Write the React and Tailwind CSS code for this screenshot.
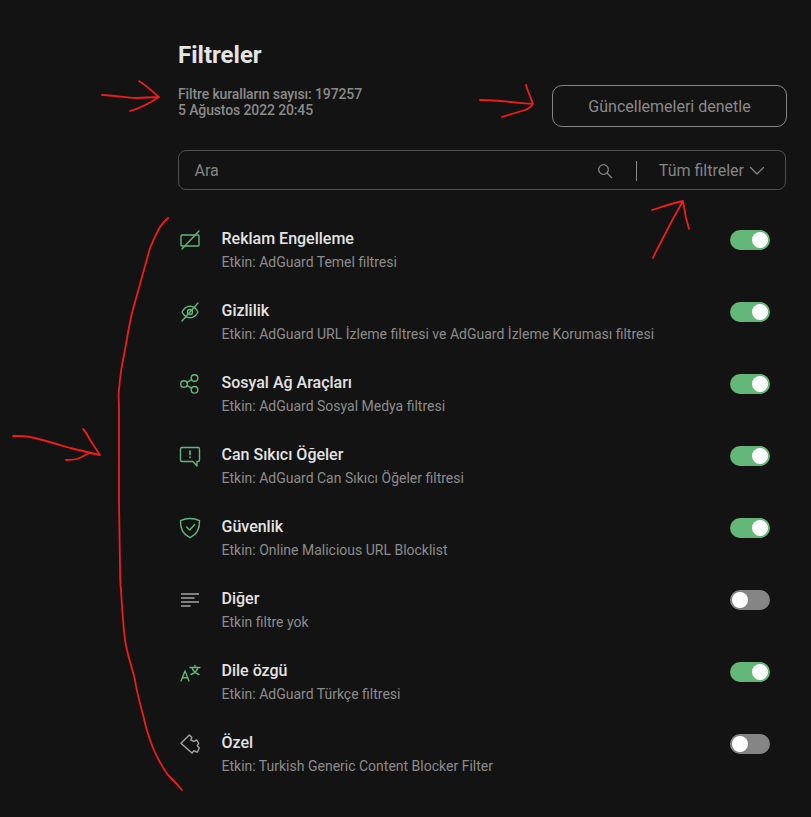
const green = "#62b678";
const gray = "#a4a4a4";

function Icon({ color, children }) {
  return (
    <svg width="24" height="24" viewBox="0 0 24 24" fill="none" stroke={color} strokeWidth="1.4" strokeLinecap="round" strokeLinejoin="round" className="shrink-0">
      {children}
    </svg>
  );
}

const filters = [
  {
    title: "Reklam Engelleme",
    sub: "Etkin: AdGuard Temel filtresi",
    on: true,
    icon: (
      <Icon color={green}>
        <rect x="3" y="7" width="18" height="11" rx="1" />
        <path d="M21 3 4 21" />
      </Icon>
    ),
  },
  {
    title: "Gizlilik",
    sub: "Etkin: AdGuard URL İzleme filtresi ve AdGuard İzleme Koruması filtresi",
    on: true,
    icon: (
      <Icon color={green}>
        <path d="M4 12c2-3.800 4.700-5.800 8-5.800s6 2 8 5.800c-2 3.800-4.700 5.800-8 5.800S6 15.800 4 12Z" />
        <circle cx="12" cy="12" r="2.500" />
        <path d="M20 3 4 21" />
      </Icon>
    ),
  },
  {
    title: "Sosyal Ağ Araçları",
    sub: "Etkin: AdGuard Sosyal Medya filtresi",
    on: true,
    icon: (
      <Icon color={green}>
        <circle cx="6" cy="12" r="3.300" />
        <circle cx="16.500" cy="6" r="3.300" />
        <circle cx="16.500" cy="17.800" r="3.300" />
        <path d="m9 10.300 4.600-2.600M9 13.700l4.600 2.500" />
      </Icon>
    ),
  },
  {
    title: "Can Sıkıcı Öğeler",
    sub: "Etkin: AdGuard Can Sıkıcı Öğeler filtresi",
    on: true,
    icon: (
      <Icon color={green}>
        <path d="M4 3.500h16A1.500 1.500 0 0 1 21.500 5v11A1.500 1.500 0 0 1 20 17.500h-1V22l-4-4.500H4A1.500 1.500 0 0 1 2.500 16V5A1.500 1.500 0 0 1 4 3.500Z" />
        <path d="M12 7v3.500M12 13v.5" strokeWidth="1.700" />
      </Icon>
    ),
  },
  {
    title: "Güvenlik",
    sub: "Etkin: Online Malicious URL Blocklist",
    on: true,
    icon: (
      <Icon color={green}>
        <path d="M12 2.500c3.500 0 6.800.8 9.500 2.200.300 7.800-2.800 13.800-9.500 17C5.300 18.500 2.200 12.500 2.500 4.700 5.200 3.300 8.500 2.500 12 2.500Z" />
        <path d="m8.500 11 3.200 3 5-5.500" />
      </Icon>
    ),
  },
  {
    title: "Diğer",
    sub: "Etkin filtre yok",
    on: false,
    icon: (
      <Icon color={gray}>
        <path d="M3 6h18M3 10h13.500M3 14h18M3 18h9.500" strokeWidth="1.500" strokeLinecap="butt" />
      </Icon>
    ),
  },
  {
    title: "Dile özgü",
    sub: "Etkin: AdGuard Türkçe filtresi",
    on: true,
    icon: (
      <Icon color={green}>
        <path d="m3 21 4-10 4 10M4.500 17.800h5" />
        <path d="M12 7.500h10M17 5.500v2M14 7.500c.8 3 3 5.500 7 7M20 7.500c-.8 3-3 5.500-7 7" />
      </Icon>
    ),
  },
  {
    title: "Özel",
    sub: "Etkin: Turkish Generic Content Blocker Filter",
    on: false,
    icon: (
      <Icon color={gray}>
        <path d="M3 11.300 11.300 3 14 5.500 12.700 8 16 9.300 18.700 8 20.700 11.300 19.300 13.700 21.300 16 19.300 20.300 16 18.700 14 21 11.300 18.700Z" />
      </Icon>
    ),
  },
];

function Toggle({ on }) {
  return (
    <div className={`flex h-5 w-10 shrink-0 items-center rounded-full px-0.5 ${on ? "justify-end bg-[#62b678]" : "justify-start bg-[#858585]"}`}>
      <div className="h-4 w-4 rounded-full bg-white" />
    </div>
  );
}

function Row({ item }) {
  return (
    <div className="flex h-[72px] items-start pr-[17px] pt-[22px]">
      <div className="mt-[2px] w-[43.5px]">{item.icon}</div>
      <div className="min-w-0 flex-1">
        <div className="pt-px text-base leading-[23px] font-medium text-[#e3e3e3]">{item.title}</div>
        <div className="text-sm leading-6 text-[#8c8c8c]">{item.sub}</div>
      </div>
      <div className="mt-1"><Toggle on={item.on} /></div>
    </div>
  );
}

// el yazısı kırmızı oklar
function Annotations() {
  return (
    <svg className="pointer-events-none absolute top-0 left-0" width="811" height="817" fill="none" stroke="#ee1c1c" strokeWidth="1.800" strokeLinecap="round" strokeLinejoin="round">
      <path d="M102 95C114 95 126 98 136 98L159 97M139 81C147 86 153 92 159 97C150 103 141 108 130 111" />
      <path d="M480 100C498 100 516 103 533 104M526 85C528 92 531 98 533 104C531 107 528 109 525 110L502 117" />
      <path d="M653 258C656 251 659 246 662 240C669 226 676 213 683 201M652 210C662 207 672 203 683 201L686 218L689 229" />
      <path d="M168 218C165 221 162 224 160 227C156 234 153 241 150 248L132 313C129 326 127 338 125 350C122 363 120 377 119 390C118 396 119 401 119 407L119 500L120 567C120 575 120 583 121 590C122 607 123 623 125 640C127 654 132 667 135 680C137 695 142 709 145 723C147 732 150 740 153 748C157 757 162 767 168 775C173 780 178 785 182 790" />
      <path d="M13 436C19 436 25 436 30 437C44 440 57 444 70 448L100 455M83 429C86 432 88 436 90 440L100 455M100 455L90 453C86 454 81 458 77 459C73 460 69 460 66 460" />
    </svg>
  );
}

export default function App() {
  return (
    <div className="relative min-h-[817px] bg-[#131313] pt-[41px] pr-[24px] pl-[178px] font-['Roboto',sans-serif]">
      <h1 className="text-2xl leading-7 font-bold text-[#e4e4e4]">Filtreler</h1>

      <div className="mt-[16px] flex items-start justify-between">
        <div className="pt-px text-sm leading-4 font-medium tracking-[-0.13px] text-[#8a8a8a]">
          <div>Filtre kuralların sayısı: 197257</div>
          <div>5 Ağustos 2022 20:45</div>
        </div>
        <button className="h-[42px] w-[235px] rounded-[10px] border border-[#858585] pt-px text-base text-[#8a8a8a]">
          Güncellemeleri denetle
        </button>
      </div>

      <div className="mt-[23px] mr-px flex h-10 items-center rounded-lg border border-[#4f4f4f] pt-px pr-[20px] pl-[15.5px]">
        <span className="flex-1 text-base text-[#858585]">Ara</span>
        <svg width="16" height="16" viewBox="0 0 16 16" fill="none" stroke="#858585" strokeWidth="1.300" strokeLinecap="round">
          <circle cx="6.500" cy="6.500" r="4.800" />
          <path d="m10.200 10.200 4.300 4.300" />
        </svg>
        <div className="mr-[22px] ml-[23px] h-5 w-px bg-[#8a8a8a]" />
        <span className="text-base text-[#858585]">Tüm filtreler</span>
        <svg className="ml-[5px]" width="16" height="16" viewBox="0 0 16 16" fill="none" stroke="#858585" strokeWidth="1.300" strokeLinecap="round" strokeLinejoin="round">
          <path d="m1.500 4.500 6.500 6.500 6.500-6.500" />
        </svg>
      </div>

      <div className="mt-[14px]">
        {filters.map((item) => (
          <Row key={item.title} item={item} />
        ))}
      </div>

      <Annotations />
    </div>
  );
}
